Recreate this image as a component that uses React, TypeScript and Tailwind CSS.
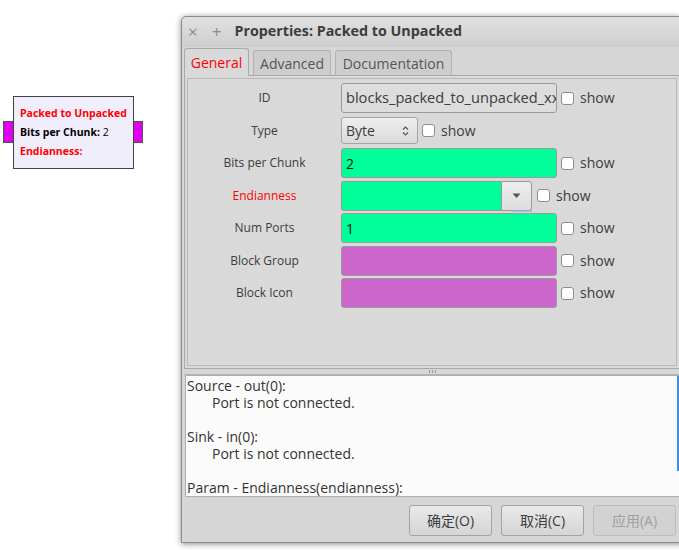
import React from "react";

const font = { fontFamily: '"Open Sans", "Noto Sans CJK SC", sans-serif' };

function Check() {
  return <div className="w-[13px] h-[13px] bg-white border border-[#8e8e8e] rounded-[3px] shrink-0" />;
}

function Show({ gap = "ml-[4px]" }: { gap?: string }) {
  return (
    <div className={`flex items-center ${gap}`}>
      <Check />
      <span className="ml-[6px] text-[14px] text-[#3c3c3c] leading-none">show</span>
    </div>
  );
}

function Entry({ bg, text }: { bg: string; text?: string }) {
  return (
    <div
      className={`w-[216px] h-[30px] border border-[#9a9a9a] rounded-[3px] flex items-center pl-[4px] overflow-hidden whitespace-nowrap text-[14px] ${bg}`}
    >
      {text}
    </div>
  );
}

function Row({ label, red, children }: { label: string; red?: boolean; children: React.ReactNode }) {
  return (
    <div className="flex items-center h-[30px]">
      <div className={`w-[153px] text-center text-[12px] ${red ? "text-[#ff0000]" : "text-[#3c3c3c]"}`}>{label}</div>
      {children}
    </div>
  );
}

export default function App() {
  return (
    <div className="relative w-[679px] h-[550px] bg-white overflow-hidden" style={font}>
      {/* Block on canvas */}
      <div className="absolute left-[3px] top-[121px] w-[11px] h-[22px] bg-[#e000ee] border border-[#555]" />
      <div className="absolute left-[132px] top-[121px] w-[11px] h-[22px] bg-[#e000ee] border border-[#555]" />
      <div className="absolute left-[13px] top-[96px] w-[121px] h-[73px] bg-[#f1eefb] border border-[#444] pl-[6px] pt-[7px] text-[10.5px] font-bold leading-[19px]">
        <div className="text-[#ff0000]">Packed to Unpacked</div>
        <div className="text-black">
          Bits per Chunk: <span className="font-normal">2</span>
        </div>
        <div className="text-[#ff0000]">Endianness:</div>
      </div>

      {/* Dialog window */}
      <div className="absolute left-[181px] top-[16px] w-[502px] h-[527px] bg-[#d6d6d6] border border-[#8a8a8a] rounded-t-[5px] shadow-[0_1px_6px_rgba(0,0,0,0.45)] flex flex-col">
        {/* title bar */}
        <div className="h-[30px] bg-gradient-to-b from-[#e1e1e1] to-[#cecece] rounded-t-[5px] flex items-center shrink-0 pb-[2px]">
          <span className="ml-[6px] text-[17px] leading-none text-[#8c8c8c]">×</span>
          <span className="ml-[14px] text-[17px] leading-none text-[#8c8c8c]">+</span>
          <span className="ml-[13px] text-[14.3px] font-bold text-[#3c3c3c]">Properties: Packed to Unpacked</span>
        </div>

        {/* tabs */}
        <div className="flex items-end h-[28px] pl-[2px] gap-[4px] shrink-0">
          <div className="w-[65px] h-[28px] bg-[#d9d9d9] border border-b-0 border-[#a9a9a9] rounded-t-[3px] flex items-center justify-center text-[14px] text-[#ff0000] relative z-10 -mb-[1px]">
            General
          </div>
          <div className="w-[78px] h-[25px] bg-[#cdcdcd] border border-b-0 border-[#b3b3b3] rounded-t-[3px] flex items-center justify-center text-[14px] text-[#555]">
            Advanced
          </div>
          <div className="w-[117px] h-[25px] bg-[#cdcdcd] border border-b-0 border-[#b3b3b3] rounded-t-[3px] flex items-center justify-center text-[14px] text-[#555]">
            Documentation
          </div>
        </div>

        {/* page */}
        <div className="ml-[2px] mr-[2px] h-[294px] border border-[#a9a9a9] bg-[#d9d9d9] p-[2px] shrink-0">
          <div className="h-full border border-[#b9b9b9] pt-[4px] flex flex-col gap-[2.5px]">
            <Row label="ID">
              <div className="w-[216px] h-[30px] border border-[#9a9a9a] rounded-[3px] flex items-center pl-[4px] overflow-hidden whitespace-nowrap text-[14.6px] bg-[#dddddd] text-[#3c3c3c]">
                blocks_packed_to_unpacked_xx
              </div>
              <Show />
            </Row>
            <Row label="Type">
              <div className="w-[77px] h-[27px] border border-[#a5a5a5] rounded-[3px] bg-gradient-to-b from-[#eeeeee] to-[#dadada] flex items-center justify-between pl-[4px] pr-[8px] text-[14px] text-[#3c3c3c]">
                <span>Byte</span>
                <svg width="7" height="12" viewBox="0 0 7 12">
                  <path d="M1 4.5 L3.5 2 L6 4.5" fill="none" stroke="#555" strokeWidth="1.2" />
                  <path d="M1 7.5 L3.5 10 L6 7.5" fill="none" stroke="#555" strokeWidth="1.2" />
                </svg>
              </div>
              <Show />
            </Row>
            <Row label="Bits per Chunk">
              <Entry bg="bg-[#00ff99] text-[#111]" text="2" />
              <Show />
            </Row>
            <Row label="Endianness" red>
              <div className="flex h-[30px] relative">
                <div className="w-[160px] h-[30px] bg-[#00ff99] border border-r-0 border-[#9a9a9a] rounded-l-[3px]" />
                <div className="w-[31px] h-[30px] border border-[#9a9a9a] rounded-r-[3px] bg-gradient-to-b from-[#efefef] to-[#dcdcdc] flex items-center justify-center">
                  <svg width="9" height="6" viewBox="0 0 9 6">
                    <path d="M0.5 0.5 H8.5 L4.5 5 Z" fill="#555" />
                  </svg>
                </div>
                <div className="absolute right-0 bottom-[-1px] w-[20px] h-[2px] bg-[#8fb2dd] opacity-70" />
              </div>
              <Show gap="ml-[5px]" />
            </Row>
            <Row label="Num Ports">
              <Entry bg="bg-[#00ff99] text-[#111]" text="1" />
              <Show />
            </Row>
            <Row label="Block Group">
              <Entry bg="bg-[#cc66cc]" />
              <Show />
            </Row>
            <Row label="Block Icon">
              <Entry bg="bg-[#cc66cc]" />
              <Show />
            </Row>
          </div>
        </div>

        {/* pane handle */}
        <div className="h-[6px] mx-[2px] border-b border-[#b5b5b5] flex items-center justify-center shrink-0">
          <div className="flex gap-[2px] pl-[0px]">
            <div className="w-[1px] h-[3px] bg-[#9a9a9a]" />
            <div className="w-[1px] h-[3px] bg-[#9a9a9a]" />
            <div className="w-[1px] h-[3px] bg-[#9a9a9a]" />
          </div>
        </div>

        {/* text view */}
        <div className="relative ml-[3px] mr-[2px] h-[122px] border border-[#b0b0b0] bg-[#fbfbfb] pl-[1px] pt-[1px] text-[14px] leading-[17px] text-[#333] whitespace-nowrap overflow-hidden shrink-0">
          <div>Source - out(0):</div>
          <div className="pl-[25px]">Port is not connected.</div>
          <div>&nbsp;</div>
          <div>Sink - in(0):</div>
          <div className="pl-[25px]">Port is not connected.</div>
          <div>&nbsp;</div>
          <div>Param - Endianness(endianness):</div>
          <div className="absolute right-0 top-0 w-[2px] h-[95px] bg-[#3d8fe0]" />
        </div>

        {/* buttons */}
        <div className="flex gap-[9px] pl-[227px] pt-[8px]">
          <div className="w-[83px] h-[31px] border border-[#a3a3a3] rounded-[3px] bg-gradient-to-b from-[#e9e9e9] to-[#d5d5d5] flex items-center justify-center text-[14px] text-[#3c3c3c]">
            确定(O)
          </div>
          <div className="w-[83px] h-[31px] border border-[#a3a3a3] rounded-[3px] bg-gradient-to-b from-[#e9e9e9] to-[#d5d5d5] flex items-center justify-center text-[14px] text-[#3c3c3c]">
            取消(C)
          </div>
          <div className="w-[83px] h-[31px] border border-[#bcbcbc] rounded-[3px] bg-[#d2d2d2] flex items-center justify-center text-[14px] text-[#a0a0a0]">
            应用(A)
          </div>
        </div>
      </div>
    </div>
  );
}
